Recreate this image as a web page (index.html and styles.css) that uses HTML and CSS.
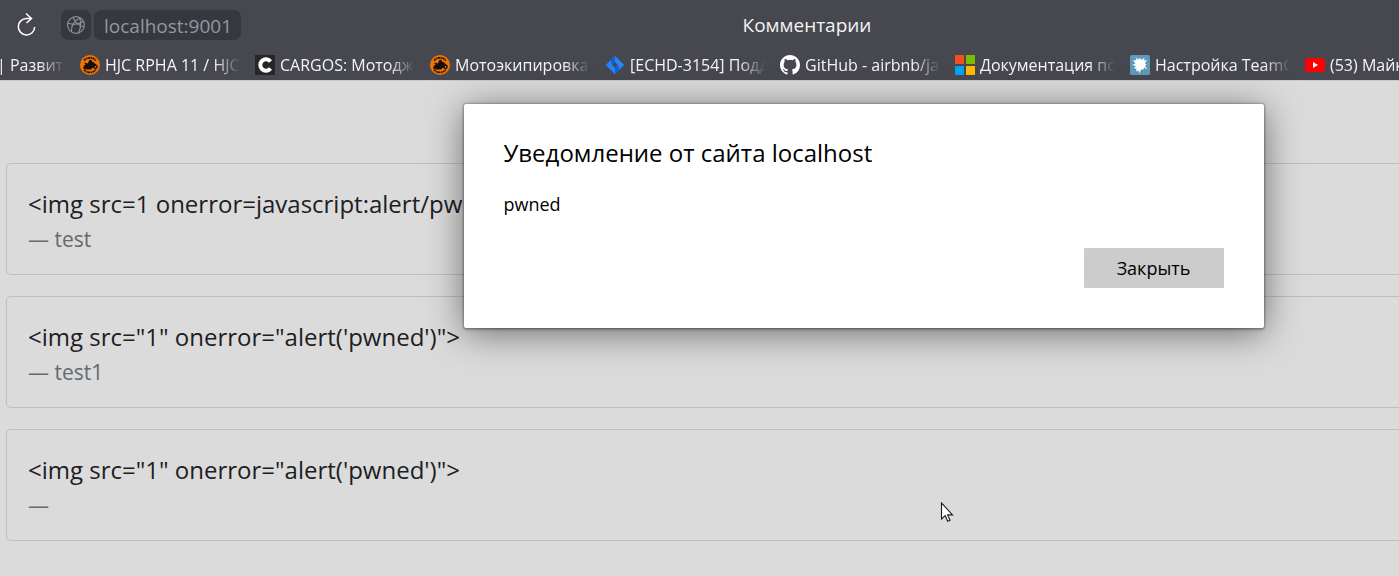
FILE: index.html
```
<!DOCTYPE html>
<html lang="ru">
<head>
<meta charset="utf-8">
<title>Комментарии</title>
<link rel="stylesheet" href="styles.css">
</head>
<body>
<svg class="defs" width="0" height="0" aria-hidden="true">
  <symbol id="rider" viewBox="0 0 20 20">
    <circle cx="10" cy="10" r="10" fill="#f27405"/>
    <path d="M4.200 5.600A7.300 7.300 0 0 1 15.800 5.600M4.200 14.600A7.300 7.300 0 0 0 15.800 14.600" fill="none" stroke="#30180a" stroke-width="1.800" stroke-dasharray="2.200 .5 1.500 .4"/>
    <path d="M4 7.500l4 1 1-3 2-1 1 2 2 1 2 2 1 2-2 2-2-1-2 2H7l-4-1 1-2 2-1z" fill="#160f0c"/>
    <circle cx="5.500" cy="12" r="2" fill="#160f0c"/><circle cx="15.500" cy="11.800" r="2.300" fill="#160f0c"/><circle cx="15.500" cy="11.800" r=".9" fill="#f27405"/>
  </symbol>
</svg>
<header class="chrome">
  <div class="toolbar">
    <button class="reload" aria-label="Обновить"><svg width="24" height="28" viewBox="0 0 24 28" fill="none" stroke="#fff" stroke-width="1.500"><path d="M17 7.500H12.500a8.200 8.200 0 1 0 8.200 8.500M12 2.500l5.500 5-5 4.500"/></svg></button>
    <button class="site" aria-label="Сведения о сайте"><svg width="20" height="20" viewBox="0 0 20 20" fill="none" stroke="#8e8f96" stroke-width="1.200"><circle cx="10" cy="10" r="8.400"/><path d="M7 2.200C9 7 13 11 18.200 12M14 2.800C8 6 5 11 5.500 17M1.800 8c5 2 10 2 15.500-1.500M13.500 2.500c2 5 1.500 10-1 15.500"/></svg></button>
    <button class="address">localhost:9001</button>
    <div class="title">Комментарии</div>
  </div>
  <nav class="bookmarks">
    <a class="bookmark first" href="#"><span class="label">| Развити</span></a>
    <a class="bookmark" href="#"><svg class="icon"><use href="#rider"/></svg><span class="label">HJC RPHA 11 / HJC</span></a>
    <a class="bookmark" href="#"><svg class="icon" viewBox="0 0 20 20"><path fill="#262626" d="M0 0h20v20H0z"/><path d="M15.500 6.500A5.700 5.700 0 1 0 15.500 13.500" fill="none" stroke="#fff" stroke-width="4"/></svg><span class="label">CARGOS: Мотоджи</span></a>
    <a class="bookmark" href="#"><svg class="icon"><use href="#rider"/></svg><span class="label">Мотоэкипировка</span></a>
    <a class="bookmark" href="#"><svg class="icon" viewBox="0 0 20 20"><path fill="#2684ff" fill-rule="evenodd" d="M10 .8 19.200 10 10 19.200.8 10zM10 7l-3 3 3 3 3-3z"/><path fill="#145fd0" d="M10 .8v6.200L7 10 5.500 5.300zM10 19.200V13l3-3 1.500 4.700z"/></svg><span class="label">[ECHD-3154] Подд</span></a>
    <a class="bookmark" href="#"><svg class="icon" viewBox="0 0 16 16"><path fill="#fff" d="M8 0C3.580 0 0 3.580 0 8c0 3.540 2.290 6.530 5.470 7.590.4.070.55-.17.55-.38v-1.490c-2.010.37-2.530-.49-2.690-.94-.09-.23-.48-.94-.82-1.130-.28-.15-.68-.52-.01-.53.63-.01 1.080.58 1.230.82.72 1.210 1.870.87 2.330.66.070-.52.28-.87.51-1.070-1.780-.2-3.640-.89-3.640-3.950 0-.87.31-1.590.82-2.150-.08-.2-.36-1.020.08-2.120 0 0 .67-.21 2.200.82a7.600 7.600 0 0 1 4 0c1.530-1.040 2.200-.82 2.200-.82.44 1.100.16 1.920.08 2.120.51.56.82 1.270.82 2.150 0 3.070-1.870 3.750-3.650 3.950.29.25.54.73.54 1.480v2.200c0 .21.15.46.55.38A8 8 0 0 0 16 8c0-4.420-3.580-8-8-8z"/></svg><span class="label">GitHub - airbnb/jav</span></a>
    <a class="bookmark" href="#"><svg class="icon" viewBox="0 0 20 20"><path fill="#f25022" d="M0 0h9v9H0z"/><path fill="#7fba00" d="M11 0h9v9h-9z"/><path fill="#00a4ef" d="M0 11h9v9H0z"/><path fill="#ffb900" d="M11 11h9v9h-9z"/></svg><span class="label">Документация по</span></a>
    <a class="bookmark" href="#"><svg class="icon" viewBox="0 0 20 20"><rect width="20" height="20" rx="1.500" fill="#5b9aba"/><path fill="#fff" d="M6.500 5L5.500 2l2.500 2.500L10 3l1.500 2 3-2.500-.5 3 3-.5-2 3 1.500 2-1.500 1 2.500 3.500-3.500-2-.5 2-2.500 0-1.500 4-1-3-2.500 1 .5-2.500L4 13l2-2-4-1 3.500-1.500L3 5.500z"/></svg><span class="label">Настройка TeamCi</span></a>
    <a class="bookmark" href="#"><svg class="icon" viewBox="0 0 20 20"><rect y="3" width="20" height="14" rx="3" fill="#f00"/><path fill="#fff" d="M8 7l5 3-5 3z"/></svg><span class="label">(53) Майк</span></a>
  </nav>
</header>
<main class="page">
  <article class="comment"><p class="text">&lt;img src=1 onerror=javascript:alert/pw</p><p class="author">— test</p></article>
  <article class="comment"><p class="text">&lt;img src="1" onerror="alert('pwned')"&gt;</p><p class="author">— test1</p></article>
  <article class="comment"><p class="text">&lt;img src="1" onerror="alert('pwned')"&gt;</p><p class="author">—</p></article>
  <section class="dialog" role="alertdialog" aria-labelledby="dialog-title">
    <h2 class="heading" id="dialog-title">Уведомление от сайта localhost</h2>
    <p class="message">pwned</p>
    <button class="close">Закрыть</button>
  </section>
  <svg class="cursor" width="14" height="21" viewBox="0 0 14 21"><path d="M1.500 1v16l3.700-3.300L7.700 19.300l2.300-1-2.400-5.400H12.500z" fill="#fff" stroke="#1c1c28" stroke-width="1.100"/></svg>
</main>
</body>
</html>
```
FILE: styles.css
```
* { box-sizing: border-box; }
body { margin: 0; min-height: 100vh; display: flex; flex-direction: column; overflow: hidden; background: #dbdbdb; font-family: "Open Sans", "Noto Sans", sans-serif; color: #1c2023; }
p, h2 { margin: 0; }
button { border: 0; padding: 0; font: inherit; }
.defs { position: absolute; }
.chrome { background: #47474f; height: 80px; color: #f4f4f5; }
.toolbar { display: flex; align-items: center; height: 50px; padding-left: 14px; }
.reload { display: flex; width: 24px; margin-right: 23px; background: none; }
.site { display: flex; align-items: center; justify-content: center; width: 30px; height: 30px; margin-right: 3px; border-radius: 7px; background: #363840; }
.address { height: 30px; padding: 0 9px 0 10px; border-radius: 7px; background: #363840; color: #96979d; font-size: 19px; line-height: 32px; }
.title { flex: 1; padding-right: 26px; text-align: center; font-size: 19px; line-height: 32px; }
.bookmarks { display: flex; gap: 15px; height: 30px; align-items: center; overflow: hidden; font-size: 16px; }
.bookmark { display: flex; align-items: center; gap: 5px; flex: none; width: 160px; color: inherit; text-decoration: none; }
.first { width: 65px; }
.first .label { margin-left: -3px; }
.icon { flex: none; width: 20px; height: 20px; }
.label { flex: 1; overflow: hidden; white-space: nowrap; line-height: 24px; mask-image: linear-gradient(to right, #000 calc(100% - 26px), transparent); }
.page { position: relative; flex: 1; display: flex; flex-direction: column; gap: 21px; padding: 82px 0 35px 6px; border-top: 1px solid #c9c9c9; }
.comment { padding: 22px 21px 18px; border: 1px solid #bebebf; border-right: 0; border-radius: 5px 0 0 5px; }
.text { font-size: 24px; line-height: 36px; white-space: nowrap; }
.author { color: #646a70; font-size: 21px; line-height: 34px; }
.dialog { position: absolute; top: 23px; left: calc(50% - 236px); width: 800px; padding: 30px 40px 40px; display: flex; flex-direction: column; border-radius: 2px; background: #fff; color: #000; box-shadow: 0 0 2px 1px rgba(0,0,0,.25), 0 2px 3px rgba(0,0,0,.2), 0 5px 36px rgba(0,0,0,.5); }
.heading { font-size: 24px; font-weight: 400; line-height: 38px; }
.message { margin: 18px 0 30px; font-size: 18px; line-height: 28px; }
.close { align-self: flex-end; width: 140px; height: 40px; border-radius: 1px; background: #ccc; color: #000; font-size: 18px; }
.cursor { position: absolute; left: 940px; top: 421px; }
```
